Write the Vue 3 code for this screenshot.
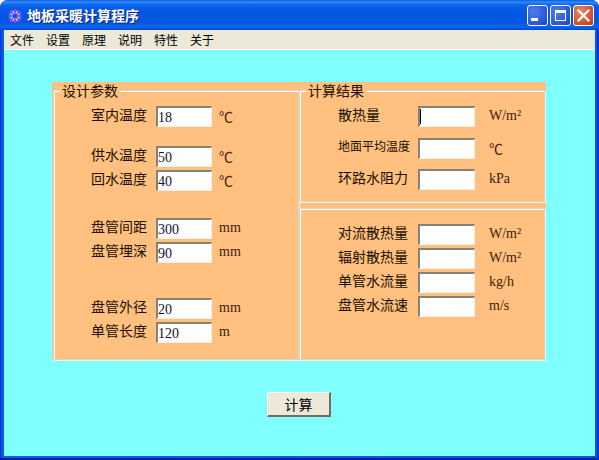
<script setup>
const menus = ['文件', '设置', '原理', '说明', '特性', '关于']
const design = [
  { label: '室内温度', value: '18', unit: '℃' },
  { label: '供水温度', value: '50', unit: '℃', gap: 'gap-19' },
  { label: '回水温度', value: '40', unit: '℃' },
  { label: '盘管间距', value: '300', unit: 'mm', gap: 'gap-27' },
  { label: '盘管埋深', value: '90', unit: 'mm' },
  { label: '盘管外径', value: '20', unit: 'mm', gap: 'gap-35' },
  { label: '单管长度', value: '120', unit: 'm' }
]
const main = [
  { label: '散热量', unit: 'W/m²', caret: true },
  { label: '地面平均温度', unit: '℃', small: true, gap: 'gap-11' },
  { label: '环路水阻力', unit: 'kPa', gap: 'gap-10' }
]
const extra = [
  { label: '对流散热量', unit: 'W/m²' },
  { label: '辐射散热量', unit: 'W/m²' },
  { label: '单管水流量', unit: 'kg/h' },
  { label: '盘管水流速', unit: 'm/s' }
]
const spokes = [0, 45, 90, 135, 180, 225, 270, 315]
</script>

<template>
  <div class="window">
    <header class="titlebar">
      <svg class="app-icon" width="16" height="16" viewBox="0 0 16 16">
        <g v-for="(a, i) in spokes" :key="a" :transform="`rotate(${a} 8 8)`">
          <line x1="8" y1="1" x2="8" y2="5.5" :stroke="i % 2 ? '#ff40ff' : '#e040e0'" stroke-width="1.2" />
        </g>
        <g v-for="a in spokes" :key="'b' + a" :transform="`rotate(${a + 22.5} 8 8)`">
          <line x1="8" y1="2" x2="8" y2="5.5" stroke="#ffffff" stroke-width="0.8" />
        </g>
      </svg>
      <span class="title">地板采暖计算程序</span>
      <div class="controls">
        <button class="ctl blue"><span class="min-glyph"></span></button>
        <button class="ctl blue"><span class="max-glyph"></span></button>
        <button class="ctl red">
          <svg width="15" height="15" viewBox="0 0 15 15">
            <path d="M2.5 2.5 L12.5 12.5 M12.5 2.5 L2.5 12.5" stroke="#fff" stroke-width="2.2" stroke-linecap="square" />
          </svg>
        </button>
      </div>
    </header>
    <nav class="menubar">
      <span v-for="m in menus" :key="m" class="menu-item">{{ m }}</span>
    </nav>
    <main class="client">
      <section class="panel">
        <div class="frame frame-left">
          <span class="legend">设计参数</span>
          <div v-for="r in design" :key="r.label" class="row" :class="r.gap">
            <span class="label">{{ r.label }}</span>
            <input class="field" :value="r.value" />
            <span class="unit">{{ r.unit }}</span>
          </div>
        </div>
        <div class="col-right">
          <div class="frame frame-top">
            <span class="legend">计算结果</span>
            <div v-for="r in main" :key="r.label" class="row row-right" :class="r.gap">
              <span class="label" :class="{ small: r.small }">{{ r.label }}</span>
              <div class="field-wrap">
                <input class="field" />
                <span v-if="r.caret" class="caret"></span>
              </div>
              <span class="unit">{{ r.unit }}</span>
            </div>
          </div>
          <div class="frame frame-bottom">
            <div v-for="r in extra" :key="r.label" class="row row-right">
              <span class="label">{{ r.label }}</span>
              <input class="field" />
              <span class="unit">{{ r.unit }}</span>
            </div>
          </div>
        </div>
      </section>
      <div class="actions">
        <button class="calc">计算</button>
      </div>
    </main>
  </div>
</template>

<style scoped>
.window {
  width: 599px;
  height: 460px;
  box-sizing: border-box;
  display: flex;
  flex-direction: column;
  padding: 0 4px 4px;
  background: linear-gradient(90deg, #0831d9 0, #0855dd 2px, #0a5fe8 3px, #0855dd 100%);
  border-radius: 8px 8px 0 0;
  overflow: hidden;
  font-family: "Noto Sans CJK SC", "Liberation Sans", sans-serif;
  box-shadow: inset -2px 0 0 #0831d9, inset 0 -2px 0 #001ea0;
}
.titlebar {
  height: 30px;
  margin: 0 -4px;
  padding: 0 5px 0 7px;
  flex: none;
  display: flex;
  align-items: center;
  background: linear-gradient(180deg, #0a5ae8 0, #2f8cf5 2px, #0a62ea 5px, #0457e4 12px, #0456e0 22px, #0a66ee 27px, #0345cc 30px);
}
.app-icon {
  flex: none;
  margin-top: 1px;
}
.title {
  margin-left: 4px;
  color: #fff;
  font-size: 14px;
  font-weight: 700;
  text-shadow: 1px 1px 1px #0f1f80;
}
.controls {
  margin-left: auto;
  display: flex;
  gap: 2px;
}
.ctl {
  width: 21px;
  height: 21px;
  padding: 0;
  box-sizing: border-box;
  border: 1px solid #fff;
  border-radius: 3px;
  display: flex;
  align-items: center;
  justify-content: center;
  position: relative;
}
.blue {
  background: radial-gradient(circle at 30% 30%, #4f7fe8, #2a55d8 70%, #1c3fc0);
}
.red {
  background: radial-gradient(circle at 35% 30%, #e98a6c, #d8522f 60%, #bd3a18);
}
.min-glyph {
  width: 7px;
  height: 3px;
  background: #fff;
  margin: 9px 6px 0 0;
}
.max-glyph {
  width: 11px;
  height: 11px;
  box-sizing: border-box;
  border: 1px solid #fff;
  border-top-width: 3px;
}
.menubar {
  height: 19px;
  flex: none;
  display: flex;
  align-items: center;
  padding-left: 0;
  background: #ece9d8;
  border-bottom: 1px solid #fff;
}
.menu-item {
  font-size: 12px;
  color: #000;
  padding: 0 6px;
  line-height: 19px;
}
.client {
  flex: 1;
  background: #80ffff;
  padding-top: 32px;
}
.panel {
  margin-left: 48px;
  width: 494px;
  height: 278px;
  box-sizing: border-box;
  padding: 8px 1px 0;
  background: #ffc080;
  display: flex;
}
.frame {
  position: relative;
  box-sizing: border-box;
  border: 1px solid #d8d4c8;
  box-shadow: inset 1px 1px 0 #fff, 1px 1px 0 #f4f0e8;
}
.frame-left {
  width: 246px;
  height: 270px;
  padding: 15px 0 0 37px;
}
.col-right {
  width: 246px;
  display: flex;
  flex-direction: column;
}
.frame-top {
  height: 112px;
  padding: 15px 0 0 38px;
}
.frame-bottom {
  height: 152px;
  margin-top: 6px;
  padding: 15px 0 0 38px;
}
.legend {
  position: absolute;
  left: 6px;
  top: -9px;
  padding: 0 2px;
  background: #ffc080;
  font-size: 14px;
  line-height: 16px;
  color: #201000;
}
.row {
  display: grid;
  grid-template-columns: 65px 56px auto;
  align-items: center;
  height: 21px;
}
.row + .row {
  margin-top: 3px;
}
.row-right {
  grid-template-columns: 80px 57px auto;
}
.row.gap-19 { margin-top: 19px; }
.row.gap-27 { margin-top: 27px; }
.row.gap-35 { margin-top: 35px; }
.row.gap-11 { margin-top: 11px; }
.row.gap-10 { margin-top: 10px; }
.label {
  font-size: 14px;
  line-height: 16px;
  color: #201000;
  margin-top: -5px;
}
.label.small {
  font-size: 12px;
  margin-left: 0;
}
.field-wrap {
  position: relative;
  display: flex;
}
.field {
  width: 100%;
  height: 21px;
  box-sizing: border-box;
  padding: 2px 0 0 0;
  margin: 0;
  min-width: 0;
  border-style: solid;
  border-width: 2px 1px 1px 2px;
  border-color: #858375 #f1efe2 #f1efe2 #858375;
  background: #fff;
  outline: none;
  font-family: "Liberation Serif", serif;
  font-size: 14px;
  color: #101030;
}
.caret {
  position: absolute;
  left: 2px;
  top: 3px;
  width: 1px;
  height: 15px;
  background: #000;
}
.unit {
  margin-left: 7px;
  font-family: "Liberation Serif", "Noto Sans CJK SC", serif;
  font-size: 14px;
  color: #40200c;
  margin-top: -2px;
}
.row-right .unit {
  margin-left: 14px;
}
.actions {
  display: flex;
  padding: 32px 0 0 263px;
}
.calc {
  width: 64px;
  height: 25px;
  padding: 0;
  box-sizing: border-box;
  border-style: solid;
  border-width: 1px 2px 2px 1px;
  border-color: #fff #716f64 #716f64 #fff;
  background: #ece9d8;
  font-family: "Noto Sans CJK SC", sans-serif;
  font-size: 14px;
  color: #000;
}
</style>

<style>
html, body { background: #fff; }
</style>
